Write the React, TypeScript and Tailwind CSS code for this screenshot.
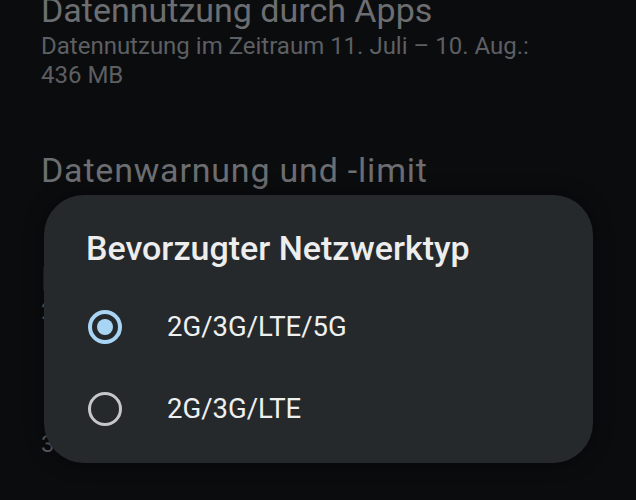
const OPTIONS = [
  { label: "2G/3G/LTE/5G", selected: true },
  { label: "2G/3G/LTE", selected: false },
];

function Radio({ selected }: { selected: boolean }) {
  return selected ? (
    <span className="flex h-[34px] w-[34px] shrink-0 items-center justify-center rounded-full border-[4px] border-[#a9d5f5]">
      <span className="h-[16px] w-[16px] rounded-full bg-[#a9d5f5]" />
    </span>
  ) : (
    <span className="h-[34px] w-[34px] shrink-0 rounded-full border-[3.5px] border-[#c6c7c8]" />
  );
}

export default function App() {
  return (
    <div className="relative h-[500px] w-[636px] overflow-hidden bg-[#0b0c0e] font-['Roboto',sans-serif]">
      <div className="flex flex-col pl-[41px]">
        <p className="mt-[-10px] text-[34px] leading-[40px] text-[#6c6e71]">Datennutzung durch Apps</p>
        <p className="mt-[2px] text-[24px] leading-[29px] text-[#5d5f62]">
          Datennutzung im Zeitraum 11. Juli – 10. Aug.:
          <br />
          436 MB
        </p>
        <p className="mt-[60px] text-[34px] leading-[40px] tracking-[0.8px] text-[#6c6e71]">Datenwarnung und -limit</p>

        {/* mostly hidden behind the dialog */}
        <p className="mt-[69px] text-[34px] leading-[40px] text-[#6c6e71]">Bevorzugter Netzwerktyp</p>
        <p className="mt-[-2px] text-[24px] leading-[29px] text-[#5d5f62]">2G/3G/LTE/5G</p>
        <p className="mt-[104px] text-[24px] leading-[29px] text-[#5d5f62]">3 gespeichert</p>
      </div>

      <div className="absolute left-[44px] top-[195px] flex h-[268px] w-[549px] flex-col rounded-[40px] bg-[#26292c] pl-[42px] pt-[33px] shadow-[0_0_18px_rgba(0,0,0,0.5)]">
        <p className="text-[34px] font-medium leading-[40px] text-[#ededed]">Bevorzugter Netzwerktyp</p>
        <ul className="mt-[18px] flex flex-col">
          {OPTIONS.map(o => (
            <li key={o.label} className="flex h-[82px] items-center gap-[45px] pl-[2px]">
              <Radio selected={o.selected} />
              <span className="text-[27.5px] text-[#eef0f0]">{o.label}</span>
            </li>
          ))}
        </ul>
      </div>
    </div>
  );
}
